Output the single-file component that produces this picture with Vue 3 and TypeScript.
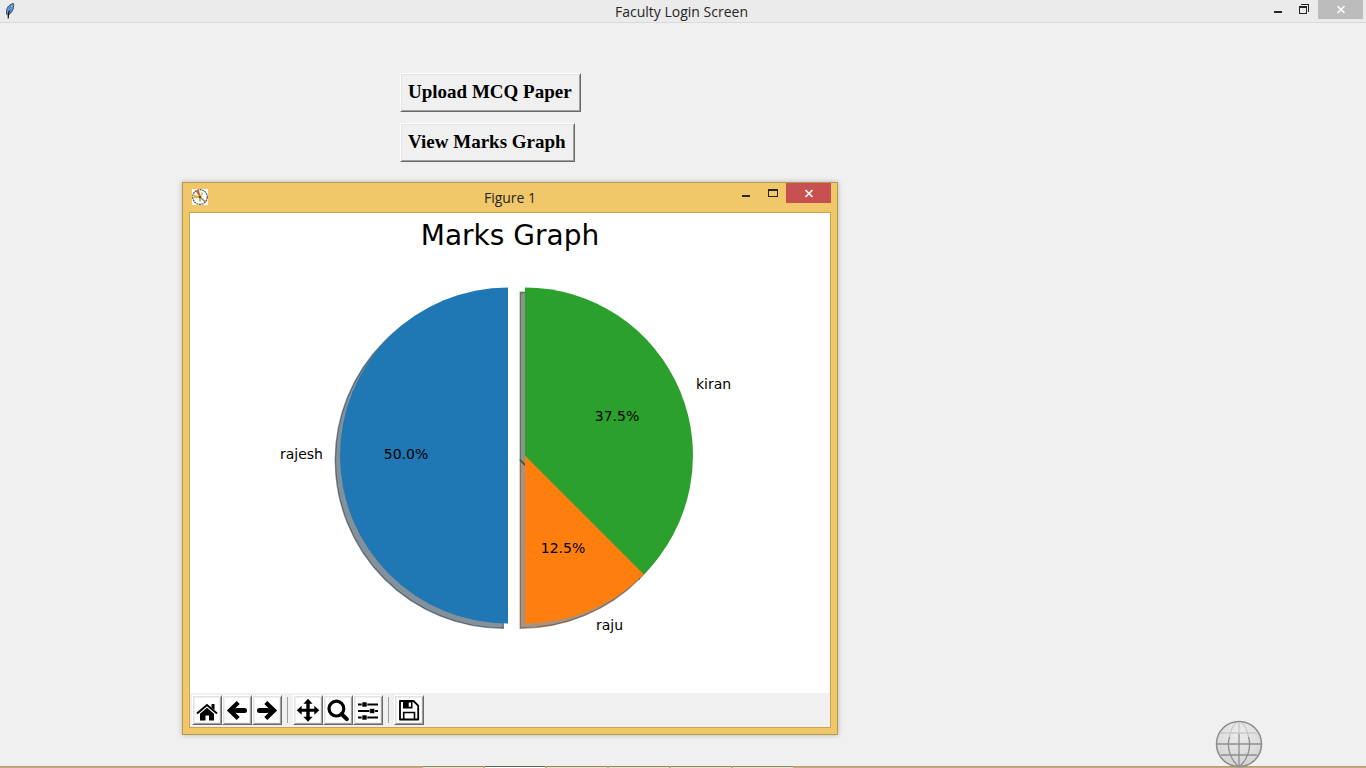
<script setup lang="ts">
interface Slice {
  name: string
  percent: number
  color: string
  shadow: string
  cx: number
  start: number
  end: number
  labelX: number
  labelY: number
  anchor: 'start' | 'end'
  valueX: number
  valueY: number
}

const radius = 168
const centerY = 242.5

const slices: Slice[] = [
  { name: 'rajesh', percent: 50, color: '#1f77b4', shadow: '#092436', cx: 318, start: 90, end: 270, labelX: 133, labelY: 246, anchor: 'end', valueX: 216, valueY: 246 },
  { name: 'raju', percent: 12.5, color: '#ff7f0e', shadow: '#4d2604', cx: 335, start: 270, end: 315, labelX: 406, labelY: 417, anchor: 'start', valueX: 373, valueY: 340 },
  { name: 'kiran', percent: 37.5, color: '#2ca02c', shadow: '#0d300d', cx: 335, start: 315, end: 450, labelX: 506, labelY: 176, anchor: 'start', valueX: 427, valueY: 208 },
]

function wedge(s: Slice): string {
  const point = (deg: number): string => {
    const a = (deg * Math.PI) / 180
    return `${(s.cx + radius * Math.cos(a)).toFixed(2)} ${(centerY - radius * Math.sin(a)).toFixed(2)}`
  }
  return `M${s.cx} ${centerY}L${point(s.start)}A${radius} ${radius} 0 0 0 ${point(s.end)}Z`
}

const tasks = [0, 1, 2, 3, 4, 5]
</script>

<template>
  <div class="screen">
    <header class="titlebar main-bar">
      <svg class="feather" width="16" height="16" viewBox="0 0 16 16" aria-hidden="true">
        <path d="M11.500.5C8 1 4.500 4 4.500 8.500L4.500 11 6 12.500C9.500 10 12.500 6 11.500.5Z" fill="#5b96dc" stroke="#3a4354" stroke-width=".9" />
        <path d="M9.500 3.500C7 7 6.200 10 6.200 15.500" fill="none" stroke="#111" stroke-width="1.200" />
        <path d="M10.300 2.500L7 7.500" stroke="#a9cdf5" />
      </svg>
      <h1>Faculty Login Screen</h1>
      <div class="controls">
        <button type="button" class="ctl" aria-label="Minimize">
          <svg width="27" height="19"><path d="M10 11h8v2h-8z" fill="#262626" /></svg>
        </button>
        <button type="button" class="ctl" aria-label="Restore">
          <svg width="27" height="19"><path d="M8 6h8v8h-8zM10 4h8v8h-1V5h-7zM9 8v5h6V8z" fill="#262626" fill-rule="evenodd" /></svg>
        </button>
        <button type="button" class="ctl close" aria-label="Close">
          <svg width="45" height="19"><path d="M19.500 6l7 7M26.500 6l-7 7" stroke="#fff" stroke-width="1.600" /></svg>
        </button>
      </div>
    </header>

    <main>
      <div class="actions">
        <button type="button" class="action">Upload MCQ Paper</button>
        <button type="button" class="action">View Marks Graph</button>
      </div>

      <section class="figure" aria-label="Figure 1">
        <div class="titlebar figure-bar">
          <svg class="plot-icon" width="16" height="16" viewBox="0 0 16 16" aria-hidden="true">
            <rect width="16" height="16" fill="#fff" />
            <circle cx="8" cy="8" r="7.300" fill="#fff" stroke="#4b4f55" stroke-width="1.200" stroke-dasharray="2 .6" />
            <path d="M8 8L4.500 2.500L6.500 1.500Z" fill="#d9541e" stroke="#d9541e" />
            <path d="M8 8L2.500 6.500V8.500Z" fill="#f0a51c" stroke="#f0a51c" />
            <path d="M8 8L13.500 13" stroke="#dc6a2b" stroke-width="1.600" />
            <path d="M8 8L10.500 3.500" stroke="#b6ce83" stroke-width="1.800" />
            <path d="M8 8V12.500" stroke="#8dc494" stroke-width="2" />
            <circle cx="8" cy="8" r="1.300" fill="#44543c" />
          </svg>
          <h2>Figure 1</h2>
          <div class="controls">
            <button type="button" class="ctl" aria-label="Minimize figure">
              <svg width="27" height="20"><path d="M10 12h8v2h-8z" fill="#262626" /></svg>
            </button>
            <button type="button" class="ctl" aria-label="Maximize figure">
              <svg width="27" height="20"><path d="M9 6h10v8H9zM10 8v5h8V8z" fill="#262626" fill-rule="evenodd" /></svg>
            </button>
            <button type="button" class="ctl close active" aria-label="Close figure">
              <svg width="45" height="20"><path d="M19.500 7l7 7M26.500 7l-7 7" stroke="#fff" stroke-width="1.600" /></svg>
            </button>
          </div>
        </div>

        <div class="figure-body">
          <svg class="chart" width="640" height="480" viewBox="0 0 640 480" role="img" aria-label="Marks Graph">
            <text class="chart-title" x="320" y="32" text-anchor="middle">Marks Graph</text>
            <g transform="translate(-4.700 4.700)">
              <path
                v-for="s in slices"
                :key="s.name"
                :d="wedge(s)"
                :fill="s.shadow"
                :stroke="s.shadow"
                fill-opacity=".5"
                stroke-opacity=".5"
                stroke-width="1.400"
              />
            </g>
            <path v-for="s in slices" :key="s.name" :d="wedge(s)" :fill="s.color" />
            <g v-for="s in slices" :key="s.name" class="chart-label">
              <text :x="s.labelX" :y="s.labelY" :text-anchor="s.anchor">{{ s.name }}</text>
              <text :x="s.valueX" :y="s.valueY" text-anchor="middle">{{ s.percent.toFixed(1) }}%</text>
            </g>
          </svg>

          <div class="toolbar" role="toolbar" aria-label="Figure tools">
            <button type="button" class="tool" aria-label="Home">
              <svg width="24" height="24" viewBox="0 0 24 24">
                <path d="M2 15.500L12 7L22 15.500" fill="none" stroke="#000" stroke-width="2" />
                <path d="M16.500 6h3v6l-3-2.500zM5 15.700L12 9.800L19 15.700V22.500H14V17.500H10.500V22.500H5z" />
              </svg>
            </button>
            <button type="button" class="tool" aria-label="Back">
              <svg width="24" height="24" viewBox="0 0 24 24">
                <path d="M13.200 4.500L5 12.500L13.200 20.500M6 12.500H20" fill="none" stroke="#000" stroke-width="4.400" />
                <path d="M19.500 10q2.500 0 2.500 2.500t-2.500 2.500h-8v-5z" />
              </svg>
            </button>
            <button type="button" class="tool" aria-label="Forward">
              <svg width="24" height="24" viewBox="0 0 24 24">
                <path d="M10.800 4.500L19 12.500L10.800 20.500M18 12.500H4" fill="none" stroke="#000" stroke-width="4.400" />
                <path d="M4.500 10q-2.500 0-2.500 2.500t2.500 2.500h8v-5z" />
              </svg>
            </button>
            <span class="separator"></span>
            <button type="button" class="tool" aria-label="Pan">
              <svg width="24" height="24" viewBox="0 0 24 24">
                <path d="M12 .8L16.600 5.800H13.700V10.800H18.300V7.800L23.300 12.300L18.300 16.800V13.800H13.700V18.800H16.600L12 23.800L7.400 18.800H10.300V13.800H5.700V16.800L.7 12.300L5.700 7.800V10.800H10.300V5.800H7.400z" />
              </svg>
            </button>
            <button type="button" class="tool" aria-label="Zoom">
              <svg width="24" height="24" viewBox="0 0 24 24">
                <circle cx="10.400" cy="10.600" r="7.400" fill="none" stroke="#000" stroke-width="3.200" />
                <path d="M15.600 16L20.800 21.200" stroke="#000" stroke-width="4" stroke-linecap="round" />
              </svg>
            </button>
            <button type="button" class="tool" aria-label="Configure subplots">
              <svg width="24" height="24" viewBox="0 0 24 24">
                <path d="M2 5.500h20v2H2zM2 12h20v2H2zM2 18.500h20v2H2z" />
                <path d="M6 4h5v5H6zM13.700 10.500h5v5h-5zM6 17h5v5H6z" stroke="#fff" stroke-width=".6" />
              </svg>
            </button>
            <span class="separator"></span>
            <button type="button" class="tool" aria-label="Save">
              <svg width="24" height="24" viewBox="0 0 24 24">
                <path d="M3 3H16.500L21.200 7.700V21.500H3z" fill="none" stroke="#000" stroke-width="1.800" stroke-linejoin="round" />
                <path d="M6.700 21.500V14.500H17.500V21.500" fill="none" stroke="#000" stroke-width="1.600" />
                <path d="M6 3H15.500V10.500H6zM11.700 4.500V8.700H14V4.500z" fill-rule="evenodd" />
              </svg>
            </button>
          </div>
        </div>
      </section>
    </main>

    <svg class="globe" width="48" height="48" viewBox="0 0 48 48" aria-hidden="true">
      <defs>
        <radialGradient id="globe-fill" cx=".5" cy=".25" r=".8">
          <stop offset="0" stop-color="#ececec" />
          <stop offset="1" stop-color="#d2d2d2" />
        </radialGradient>
      </defs>
      <circle cx="24" cy="24" r="22.500" fill="url(#globe-fill)" stroke="#8b8b8b" stroke-width="1.500" />
      <g fill="none" stroke="#8f8f8f">
        <path d="M1.500 24h45M6 35h36" stroke-width="1.300" />
        <path d="M24 14v32M14.500 17C11.500 27 15 39 23 46M33.500 17C36.500 27 33 39 25 46" stroke-width="1.300" />
        <path d="M5 13h38M24 2v12M22 2C18 5 15.500 11 14.500 17M26 2C30 5 32.500 11 33.500 17" stroke="#bdbdbd" />
      </g>
    </svg>

    <footer class="taskbar">
      <span v-for="t in tasks" :key="t" class="task" :class="{ current: t === 1 }"></span>
    </footer>
  </div>
</template>

<style>
body {
  margin: 0;
  background: #f0f0f0;
}
</style>

<style scoped>
.screen {
  position: relative;
  display: flex;
  flex-direction: column;
  box-sizing: border-box;
  min-height: 100vh;
  overflow: hidden;
  background: #f0f0f0;
  font-family: "Open Sans", "Noto Sans", sans-serif;
}

button {
  margin: 0;
  padding: 0;
  border: 0;
  background: none;
}

svg {
  display: block;
}

.titlebar {
  display: grid;
  grid-template-columns: 1fr auto 1fr;
  color: #262626;
}

.main-bar {
  height: 22px;
  padding-right: 3px;
  border-bottom: 1px solid #dadada;
  background: #ebebeb;
}

h1,
h2 {
  margin: 0;
  font-size: 14px;
  font-weight: 400;
  line-height: 24px;
}

h2 {
  line-height: 30px;
}

.feather {
  margin: 3px 0 0 2px;
}

.controls {
  display: flex;
  align-items: flex-start;
  justify-content: flex-end;
}

.close {
  background: #bcbcbc;
}

.close.active {
  background: #c75050;
}

main {
  flex: 1;
  padding-top: 50px;
}

.actions {
  display: flex;
  flex-direction: column;
  align-items: flex-start;
  gap: 11px;
  padding-left: 400px;
}

.action,
.tool {
  border: 1px solid;
  border-color: #fff #696969 #696969 #fff;
  background: #f0f0f0;
  box-shadow: inset 1px 1px #e3e3e3, inset -1px -1px #a0a0a0;
}

.action {
  height: 39px;
  padding: 0 8px 2px 7px;
  color: #000;
  font: bold 19px "Liberation Serif", "Times New Roman", serif;
}

.figure {
  width: fit-content;
  margin: 20px 0 0 182px;
  padding: 0 6px 6px;
  border: 1px solid #b89850;
  background: #f0c869;
  box-shadow: 0 0 5px rgba(0, 0, 0, 0.25);
}

.figure-bar {
  height: 29px;
}

.plot-icon {
  margin: 6px 0 0 3px;
}

.figure-body {
  border: 1px solid #c5a456;
  background: #f0f0f0;
}

.chart {
  background: #fff;
  font-family: "DejaVu Sans", sans-serif;
}

.chart-title {
  font-size: 28px;
}

.chart-label {
  font-size: 14px;
}

.toolbar {
  display: flex;
  align-items: center;
  padding: 2px;
}

.tool {
  padding: 2px;
}

.tool svg {
  background: #fff;
}

.separator {
  width: 1px;
  height: 26px;
  margin: 0 5px;
  background: #a0a0a0;
}

.globe {
  position: absolute;
  right: 103px;
  bottom: 0;
  z-index: 1;
}

.taskbar {
  display: flex;
  gap: 2px;
  height: 1px;
  padding-left: 423px;
  border-top: 1px solid #b39f74;
  background: #c3ab7c;
}

.task {
  width: 60px;
  background: #ebe2cc;
  box-shadow: 0 -1px #8f8566;
}

.task.current {
  background: #fff;
  box-shadow: 0 -1px #68634c;
}
</style>
